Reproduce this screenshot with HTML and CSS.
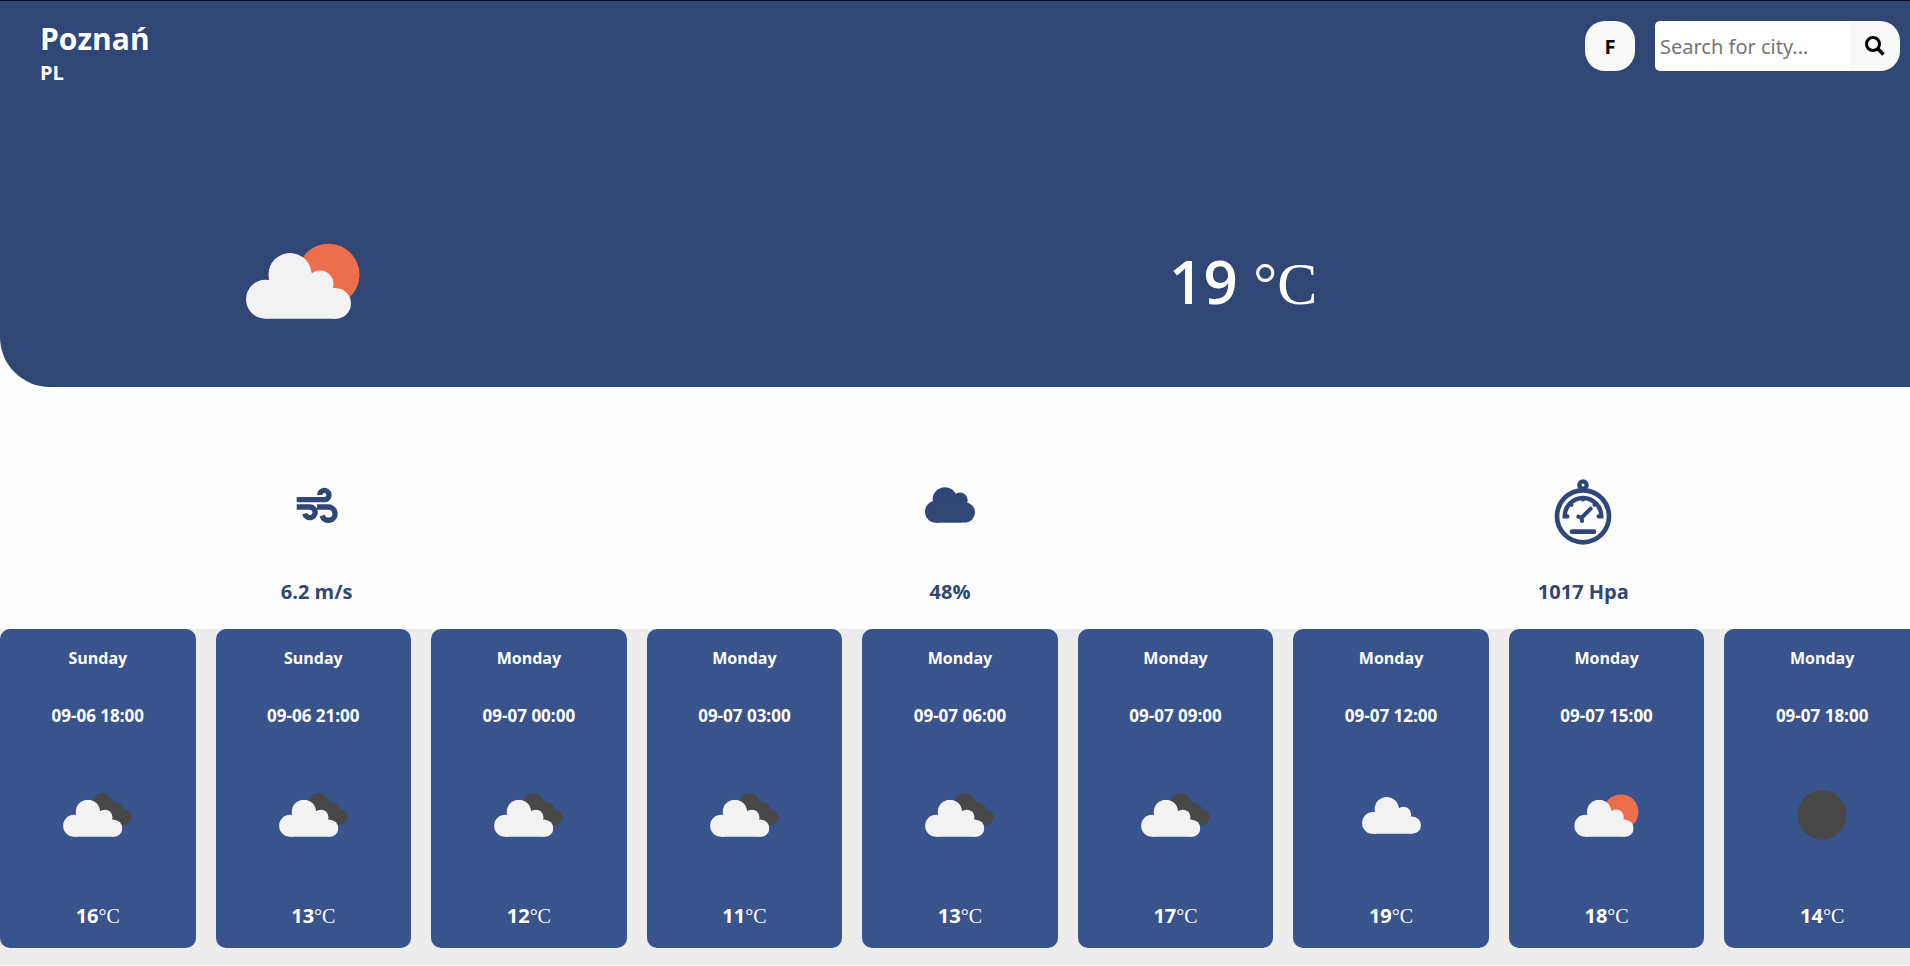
FILE: index.html
```
<!DOCTYPE html>
<html lang="en">
<head>
<meta charset="utf-8">
<title>Weather</title>
<link rel="stylesheet" href="styles.css">
</head>
<body>
<svg class="sprite" aria-hidden="true">
  <symbol id="white-cloud" viewBox="26 33 105 66">
    <g fill="#f2f2f2">
      <circle cx="45.500" cy="79.200" r="19.500"/>
      <circle cx="70" cy="54.500" r="21.500"/>
      <circle cx="100" cy="64" r="13.500"/>
      <circle cx="115.800" cy="83.500" r="15.200"/>
      <path d="M45.500 60H49L60 50H90L101 68H116V98.700H45.500Z"/>
    </g>
  </symbol>
  <symbol id="few-clouds" viewBox="26 23 114 76">
    <circle cx="108.500" cy="54.700" r="31" fill="#ec6e4c"/>
    <use href="#white-cloud" x="26" y="33" width="105" height="66"/>
  </symbol>
  <symbol id="broken-clouds" viewBox="26 21 122 78">
    <g fill="#484848">
      <circle cx="96" cy="39.500" r="18"/>
      <circle cx="121" cy="50" r="12"/>
      <circle cx="134" cy="64" r="13.500"/>
      <path d="M85 40L110 32L128 44L134 78H110Z"/>
    </g>
    <use href="#white-cloud" x="26" y="33" width="105" height="66"/>
  </symbol>
  <symbol id="clear-night" viewBox="0 0 50 50">
    <circle cx="25" cy="25" r="24.500" fill="#484848"/>
  </symbol>
</svg>

<header class="hero">
  <div class="topbar">
    <div class="place">
      <h1 class="city">Poznań</h1>
      <p class="country">PL</p>
    </div>
    <div class="tools">
      <button class="unit" type="button" aria-label="Switch to Fahrenheit">F</button>
      <form class="search">
        <input class="search-input" type="text" placeholder="Search for city..." aria-label="Search for city">
        <button class="search-button" type="button" aria-label="Search">
          <svg width="20" height="20" viewBox="0 0 20 20" fill="none" stroke="#000"><circle cx="8" cy="8" r="6.500" stroke-width="3"/><path d="M13 13L18.500 18.500" stroke-width="3.500"/></svg>
        </button>
      </form>
    </div>
  </div>
  <div class="current">
    <svg class="current-icon"><use href="#few-clouds"/></svg>
    <p class="current-temp">19 <span class="degree">°C</span></p>
  </div>
</header>

<section class="stats">
  <div class="stat">
    <div class="stat-icon">
      <svg width="42" height="36" viewBox="138 51 126 108" fill="none" stroke="#304674" stroke-width="16">
        <path d="M140 89H226A14 14 0 1 0 209 75"/>
        <path d="M140 111H180A16 16 0 1 1 164 131"/>
        <path d="M201 111H235A20 20 0 1 1 216 137"/>
      </svg>
    </div>
    <p class="stat-value">6.2 m/s</p>
  </div>
  <div class="stat">
    <div class="stat-icon">
      <svg width="50" height="36" viewBox="77 51 151 107" fill="#304674">
        <circle cx="110" cy="125" r="33"/><circle cx="137" cy="88" r="37"/><circle cx="183" cy="90" r="23"/><circle cx="197" cy="127" r="31"/><path d="M110 90H190V158H110Z"/>
      </svg>
    </div>
    <p class="stat-value">48%</p>
  </div>
  <div class="stat">
    <div class="stat-icon gauge">
      <svg width="58" height="66" viewBox="135 58 174 198" fill="none" stroke="#304674" stroke-width="14" stroke-linecap="round">
        <circle cx="222" cy="170" r="78"/>
        <circle cx="222" cy="76" r="11" stroke-width="13"/>
        <path d="M175 170H167A55 55 0 0 1 277 170H269" stroke-width="13"/>
        <path d="M222 114V120M184 132L188 136M260 132L256 136" stroke-width="11"/>
        <path d="M217 175L245 147M208 171L218 174L219 184" stroke-width="12"/>
        <path d="M189 216H255"/>
      </svg>
    </div>
    <p class="stat-value">1017 Hpa</p>
  </div>
</section>

<section class="forecast">
  <article class="card"><h2 class="day">Sunday</h2><p class="time">09-06 18:00</p><div class="card-icon"><svg class="broken"><use href="#broken-clouds"/></svg></div><p class="temp">16<span class="degree">°C</span></p></article>
  <article class="card"><h2 class="day">Sunday</h2><p class="time">09-06 21:00</p><div class="card-icon"><svg class="broken"><use href="#broken-clouds"/></svg></div><p class="temp">13<span class="degree">°C</span></p></article>
  <article class="card"><h2 class="day">Monday</h2><p class="time">09-07 00:00</p><div class="card-icon"><svg class="broken"><use href="#broken-clouds"/></svg></div><p class="temp">12<span class="degree">°C</span></p></article>
  <article class="card"><h2 class="day">Monday</h2><p class="time">09-07 03:00</p><div class="card-icon"><svg class="broken"><use href="#broken-clouds"/></svg></div><p class="temp">11<span class="degree">°C</span></p></article>
  <article class="card"><h2 class="day">Monday</h2><p class="time">09-07 06:00</p><div class="card-icon"><svg class="broken"><use href="#broken-clouds"/></svg></div><p class="temp">13<span class="degree">°C</span></p></article>
  <article class="card"><h2 class="day">Monday</h2><p class="time">09-07 09:00</p><div class="card-icon"><svg class="broken"><use href="#broken-clouds"/></svg></div><p class="temp">17<span class="degree">°C</span></p></article>
  <article class="card"><h2 class="day">Monday</h2><p class="time">09-07 12:00</p><div class="card-icon"><svg class="cloudy"><use href="#white-cloud"/></svg></div><p class="temp">19<span class="degree">°C</span></p></article>
  <article class="card"><h2 class="day">Monday</h2><p class="time">09-07 15:00</p><div class="card-icon"><svg class="few"><use href="#few-clouds"/></svg></div><p class="temp">18<span class="degree">°C</span></p></article>
  <article class="card"><h2 class="day">Monday</h2><p class="time">09-07 18:00</p><div class="card-icon"><svg class="night"><use href="#clear-night"/></svg></div><p class="temp">14<span class="degree">°C</span></p></article>
</section>
</body>
</html>
```
FILE: styles.css
```
* { box-sizing: border-box; margin: 0; padding: 0; }
body {
  background: #fdfdfd;
  color: #fff;
  font-family: "Open Sans", "Noto Sans", sans-serif;
  font-weight: 700;
  overflow-x: hidden;
}
.sprite { position: absolute; width: 0; height: 0; }
.hero {
  border-top: 1px solid #060d1f;
  border-bottom-left-radius: 50px;
  background: #304674;
  padding-bottom: 68px;
}
.topbar {
  display: flex;
  justify-content: space-between;
  align-items: flex-start;
  padding: 17px 10px 0 40px;
}
.city { font-size: 30px; line-height: 41px; }
.country { font-size: 20px; line-height: 27px; }
.tools { display: flex; gap: 20px; padding-top: 3px; }
.unit, .search-button {
  width: 50px;
  height: 50px;
  border: 0;
  background: #f9f9f9;
  color: #000;
}
.unit { border-radius: 20px; font: 700 20px "Noto Sans", sans-serif; }
.search { display: flex; width: 245px; }
.search-input {
  flex: 1;
  min-width: 0;
  height: 50px;
  border: 0;
  border-radius: 5px 0 0 5px;
  padding: 0 5px;
  background: #fff;
  font: 400 20px "Noto Sans", sans-serif;
}
.search-input::placeholder { color: #757575; }
.search-button {
  display: flex;
  align-items: center;
  justify-content: center;
  border-radius: 0 20px 20px 0;
}
.current {
  display: grid;
  grid-template-columns: 10fr 21fr;
  align-items: center;
  justify-items: center;
  padding: 157px 30px 0 0;
}
.current-icon { width: 114px; height: 76px; }
.current-temp { font-size: 60px; line-height: 76px; font-weight: 600; }
.degree { font-family: "Liberation Serif", serif; font-weight: 400; line-height: 1; }
.stats {
  display: grid;
  grid-template-columns: repeat(3, 1fr);
  padding: 85px 10px 23px 0;
  color: #304674;
}
.stat { display: flex; flex-direction: column; align-items: center; }
.stat-icon {
  display: flex;
  align-items: center;
  height: 66px;
  margin-bottom: 40px;
}
.stat-icon.gauge { height: 80px; margin-bottom: 26px; }
.stat-value { font-size: 20px; line-height: 28px; }
.forecast {
  display: grid;
  grid-auto-flow: column;
  grid-auto-columns: calc((100% - 150px) / 9);
  gap: 20px;
  padding-bottom: 17px;
  background: #ededed;
  overflow: hidden;
}
.card {
  display: flex;
  flex-direction: column;
  align-items: center;
  padding: 19px 0 18px;
  border-radius: 10px;
  background: #39538d;
}
.day { font-size: 16px; line-height: 20px; }
.time { margin-top: 38px; font-size: 17px; line-height: 20px; }
.card-icon { display: flex; align-items: center; height: 100px; margin: 39px 0 37px; }
.broken { width: 69px; height: 44px; }
.cloudy { width: 59px; height: 37px; }
.few { width: 65px; height: 43px; }
.night { width: 50px; height: 50px; }
.temp { font-size: 20px; line-height: 28px; }
```
